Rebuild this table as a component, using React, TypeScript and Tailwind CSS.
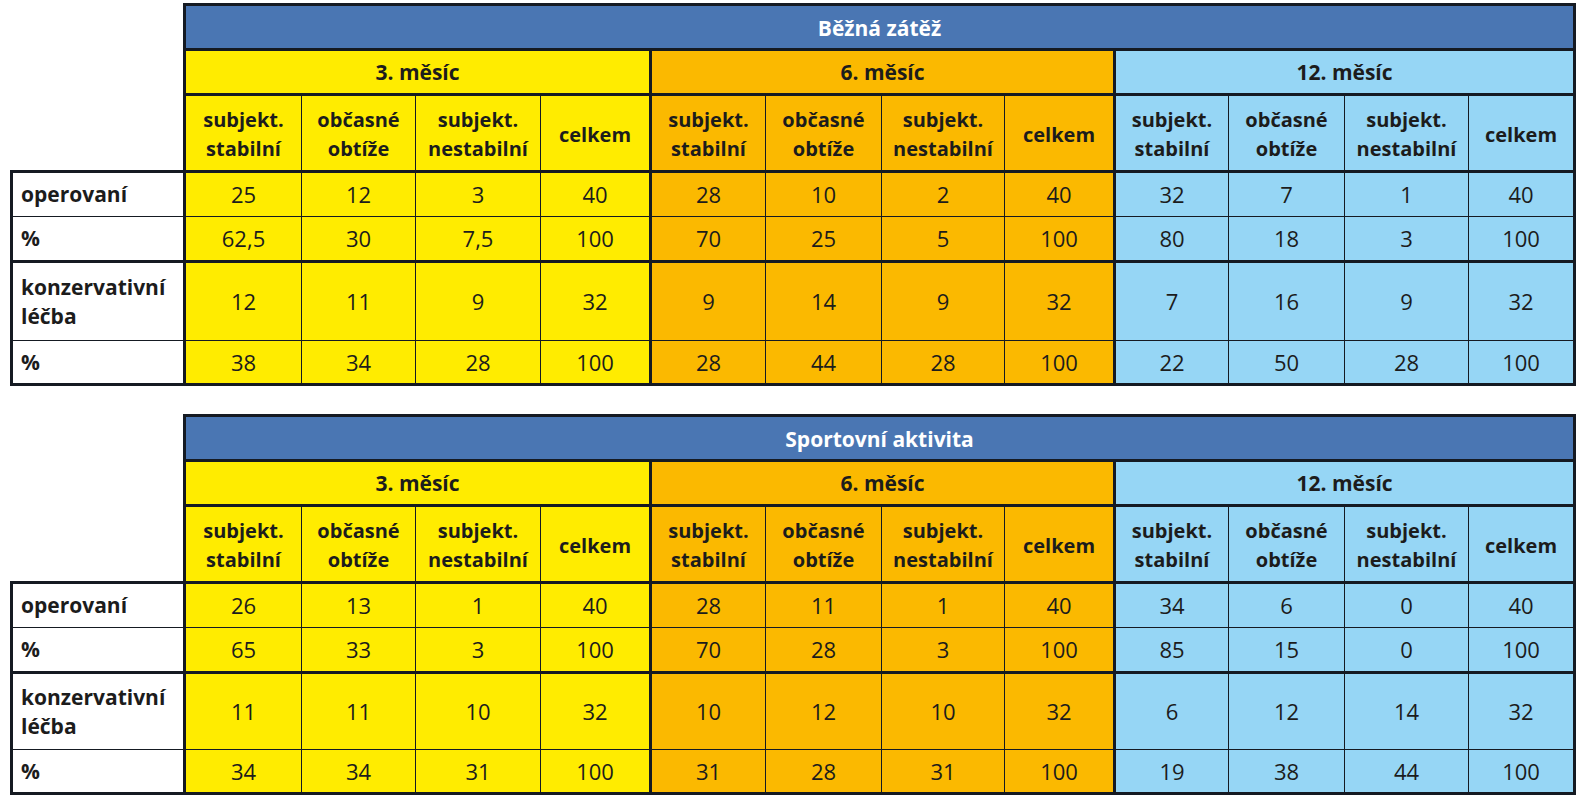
const groups = [
  { label: '3. měsíc', bg: 'bg-[#ffec00]' },
  { label: '6. měsíc', bg: 'bg-[#fbb900]' },
  { label: '12. měsíc', bg: 'bg-[#96d6f5]' },
];

const subHeads = [
  ['subjekt.', 'stabilní'],
  ['občasné', 'obtíže'],
  ['subjekt.', 'nestabilní'],
  ['celkem'],
];

const colWidths = [173, 117, 114, 125, 110, 115, 116, 123, 110, 114, 116, 124, 106];

type Row = { label: string[]; values: string[][]; h: string; thickTop?: boolean; last?: boolean };

const tables: { title: string; rows: Row[] }[] = [
  {
    title: 'Běžná zátěž',
    rows: [
      { label: ['operovaní'], values: [['25', '12', '3', '40'], ['28', '10', '2', '40'], ['32', '7', '1', '40']], h: 'h-[45px]', thickTop: true },
      { label: ['%'], values: [['62,5', '30', '7,5', '100'], ['70', '25', '5', '100'], ['80', '18', '3', '100']], h: 'h-[45px]' },
      { label: ['konzervativní', 'léčba'], values: [['12', '11', '9', '32'], ['9', '14', '9', '32'], ['7', '16', '9', '32']], h: 'h-[79px]', thickTop: true },
      { label: ['%'], values: [['38', '34', '28', '100'], ['28', '44', '28', '100'], ['22', '50', '28', '100']], h: 'h-[44px]', last: true },
    ],
  },
  {
    title: 'Sportovní aktivita',
    rows: [
      { label: ['operovaní'], values: [['26', '13', '1', '40'], ['28', '11', '1', '40'], ['34', '6', '0', '40']], h: 'h-[45px]', thickTop: true },
      { label: ['%'], values: [['65', '33', '3', '100'], ['70', '28', '3', '100'], ['85', '15', '0', '100']], h: 'h-[45px]' },
      { label: ['konzervativní', 'léčba'], values: [['11', '11', '10', '32'], ['10', '12', '10', '32'], ['6', '12', '14', '32']], h: 'h-[77px]', thickTop: true },
      { label: ['%'], values: [['34', '34', '31', '100'], ['31', '28', '31', '100'], ['19', '38', '44', '100']], h: 'h-[44px]', last: true },
    ],
  },
];

function ResultTable({ title, rows }: { title: string; rows: Row[] }) {
  return (
    <table className="border-collapse table-fixed w-[1563px] text-[#1c1c1c]">
      <colgroup>
        {colWidths.map((w, i) => (
          <col key={i} style={{ width: w }} />
        ))}
      </colgroup>
      <tbody>
        <tr className="h-[45px]">
          <td rowSpan={3} className="border-0 bg-white"></td>
          <td colSpan={12} className="border-[3px] border-[#151a22] bg-[#4a76b3] text-center text-white font-bold text-[21px] pt-[3px]">
            {title}
          </td>
        </tr>
        <tr className="h-[45px]">
          {groups.map(g => (
            <td key={g.label} colSpan={4} className={`border-[3px] border-[#151a22] ${g.bg} text-center font-bold text-[21px] pt-[2px]`}>
              {g.label}
            </td>
          ))}
        </tr>
        <tr className="h-[77px]">
          {groups.map(g =>
            subHeads.map((s, i) => (
              <td
                key={g.label + i}
                className={`border border-[#151a22] border-t-[3px] ${i === 0 ? 'border-l-[3px]' : ''} ${i === 3 ? 'border-r-[3px]' : ''} ${g.bg} text-center font-bold text-[20px] leading-[29px] pt-[2px]`}
              >
                {s.map(l => (
                  <div key={l}>{l}</div>
                ))}
              </td>
            ))
          )}
        </tr>
        {rows.map((r, ri) => (
          <tr key={ri} className={r.h}>
            <td
              className={`border border-[#151a22] border-l-[3px] border-r-[3px] ${r.thickTop ? 'border-t-[3px]' : ''} ${r.last ? 'border-b-[3px]' : ''} bg-white pl-[8px] font-bold text-[21px] leading-[29px]`}
            >
              {r.label.map(l => (
                <div key={l}>{l}</div>
              ))}
            </td>
            {groups.map((g, gi) =>
              r.values[gi].map((v, i) => (
                <td
                  key={gi + '-' + i}
                  className={`border border-[#151a22] ${r.thickTop ? 'border-t-[3px]' : ''} ${r.last ? 'border-b-[3px]' : ''} ${i === 0 ? 'border-l-[3px]' : ''} ${i === 3 ? 'border-r-[3px]' : ''} ${g.bg} text-center text-[22px]`}
                >
                  {v}
                </td>
              ))
            )}
          </tr>
        ))}
      </tbody>
    </table>
  );
}

export default function App() {
  return (
    <div className="w-[1582px] h-[800px] bg-white overflow-hidden pl-[10px] pt-[3px] font-['Open_Sans',sans-serif]">
      <div className="flex flex-col gap-[28px]">
        {tables.map(t => (
          <ResultTable key={t.title} title={t.title} rows={t.rows} />
        ))}
      </div>
    </div>
  );
}
